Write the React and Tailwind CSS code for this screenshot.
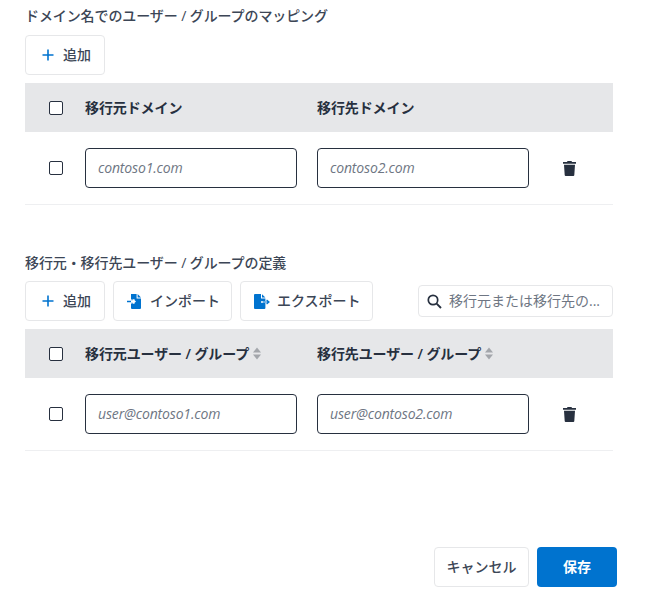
const SANS = "font-['Open_Sans','Noto_Sans_CJK_JP',sans-serif]";

function Plus() {
  return (
    <svg width="12" height="12" viewBox="0 0 12 12" className="shrink-0">
      <path d="M6 0.5v11M0.5 6h11" stroke="#0073cf" strokeWidth="1.6" fill="none" />
    </svg>
  );
}

function ImportIcon() {
  return (
    <svg width="15" height="15" viewBox="0 0 15 15" className="shrink-0">
      <path d="M4 0h5.6v4.4H14V14a1 1 0 0 1-1 1H5a1 1 0 0 1-1-1V9.4h4V5.6H4z" fill="#0073cf" />
      <path d="M10.6 0L14 3.4h-3.4z" fill="#0073cf" />
      <path d="M0 7.5h8M5.6 5L8.2 7.5L5.6 10" stroke="#0073cf" strokeWidth="1.4" fill="none" />
      <path d="M4 7.5h4M5.8 5.4L8 7.5L5.8 9.6" stroke="#fff" strokeWidth="1.4" fill="none" />
    </svg>
  );
}

function ExportIcon() {
  return (
    <svg width="16" height="15" viewBox="0 0 16 15" className="shrink-0">
      <path d="M1 0h6v4.4h4.4v2.8H7v1.6h4.4V14a1 1 0 0 1-1 1H1a1 1 0 0 1-1-1V1a1 1 0 0 1 1-1z" fill="#0073cf" />
      <path d="M8 0.2L11.4 3.4H8z" fill="#0073cf" />
      <path d="M9 8h5.5M12.6 6l2.4 2-2.4 2" stroke="#0073cf" strokeWidth="1.2" fill="none" />
    </svg>
  );
}

function Trash() {
  return (
    <svg width="13" height="15" viewBox="0 0 13 15">
      <path d="M4.5 0h4l.5 1h4v1.7H0V1h4z" fill="#27303f" />
      <path d="M1 3.8h11L11.3 14a1 1 0 0 1-1 1H2.7a1 1 0 0 1-1-1z" fill="#27303f" />
    </svg>
  );
}

function SortIcon() {
  return (
    <svg width="8" height="13" viewBox="0 0 8 13" className="shrink-0">
      <path d="M4 0.5L8 5.6H0z" fill="#a3a6ab" />
      <path d="M4 12.5L0 7.4h8z" fill="#a3a6ab" />
    </svg>
  );
}

function Check() {
  return <span className="block h-[14px] w-[14px] rounded-[2px] border border-[#27303f] bg-white" />;
}

function ToolButton({ icon, label, className }) {
  return (
    <button className={`flex h-10 items-center rounded border border-[#e6e7e9] bg-white text-sm font-medium text-[#3c4656] ${className}`}>
      {icon}
      <span>{label}</span>
    </button>
  );
}

function Field({ placeholder }) {
  return (
    <div className="flex h-10 w-[212px] items-center rounded border border-[#27303f] bg-white pl-3 text-sm italic tracking-[-0.15px] text-[#6e7683]">
      {placeholder}
    </div>
  );
}

function HeadCell({ label, sort }) {
  return (
    <div className="flex w-[232px] items-center gap-1 text-sm font-semibold text-[#27303f]">
      <span className="tracking-[-0.1px]">{label}</span>
      {sort && <SortIcon />}
    </div>
  );
}

function MappingTable({ left, right, leftHolder, rightHolder, sort }) {
  return (
    <div>
      <div className="flex h-[49px] items-center bg-[#e6e7e9]">
        <div className="flex w-[60px] justify-center pl-[2px]">
          <Check />
        </div>
        <HeadCell label={left} sort={sort} />
        <HeadCell label={right} sort={sort} />
      </div>
      <div className="flex h-[73px] items-center border-b border-[#eeeff1]">
        <div className="flex w-[60px] justify-center pl-[2px]">
          <Check />
        </div>
        <div className="w-[232px]">
          <Field placeholder={leftHolder} />
        </div>
        <div className="w-[232px]">
          <Field placeholder={rightHolder} />
        </div>
        <div className="flex w-[40px] justify-center">
          <Trash />
        </div>
      </div>
    </div>
  );
}

export default function App() {
  return (
    <div className={`flex h-[606px] w-[647px] flex-col overflow-hidden bg-white ${SANS}`}>
      <div className="w-[613px] pl-[25px]">
        <h2 className="flex h-[35px] items-center pb-[3px] text-sm font-medium tracking-[-0.1px] text-[#3c4656]">
          ドメイン名でのユーザー / グループのマッピング
        </h2>
        <div className="mb-2 flex">
          <ToolButton className="w-20 gap-[9px] pl-4" icon={<Plus />} label="追加" />
        </div>
        <MappingTable
          left="移行元ドメイン"
          right="移行先ドメイン"
          leftHolder="contoso1.com"
          rightHolder="contoso2.com"
        />

        <h2 className="mt-[44px] flex h-[32px] items-center pb-[4px] text-sm font-medium tracking-[-0.1px] text-[#3c4656]">
          移行元・移行先ユーザー / グループの定義
        </h2>
        <div className="mb-2 flex items-center gap-2">
          <ToolButton className="w-20 gap-[9px] pl-4" icon={<Plus />} label="追加" />
          <ToolButton className="w-[119px] gap-2 pl-[13px]" icon={<ImportIcon />} label="インポート" />
          <ToolButton className="w-[133px] gap-[7px] pl-[13px]" icon={<ExportIcon />} label="エクスポート" />
          <div className="ml-auto flex h-8 w-[195px] items-center gap-[7px] rounded border border-[#e6e7e9] bg-white pl-2 text-sm text-[#6e7683]">
            <svg width="15" height="15" viewBox="0 0 15 15" className="shrink-0">
              <circle cx="6" cy="6" r="4.7" stroke="#27303f" strokeWidth="1.7" fill="none" />
              <path d="M9.6 9.6L14 14" stroke="#27303f" strokeWidth="1.9" fill="none" />
            </svg>
            <span>移行元または移行先の...</span>
          </div>
        </div>
        <MappingTable
          left="移行元ユーザー / グループ"
          right="移行先ユーザー / グループ"
          leftHolder="user@contoso1.com"
          rightHolder="user@contoso2.com"
          sort
        />
      </div>

      <div className="mt-[96px] flex w-[617px] justify-end gap-2">
        <button className="h-10 w-[95px] rounded border border-[#e6e7e9] bg-white text-sm font-medium text-[#3c4656]">
          キャンセル
        </button>
        <button className="h-10 w-20 rounded bg-[#0073cf] text-sm font-bold text-white">保存</button>
      </div>
    </div>
  );
}
